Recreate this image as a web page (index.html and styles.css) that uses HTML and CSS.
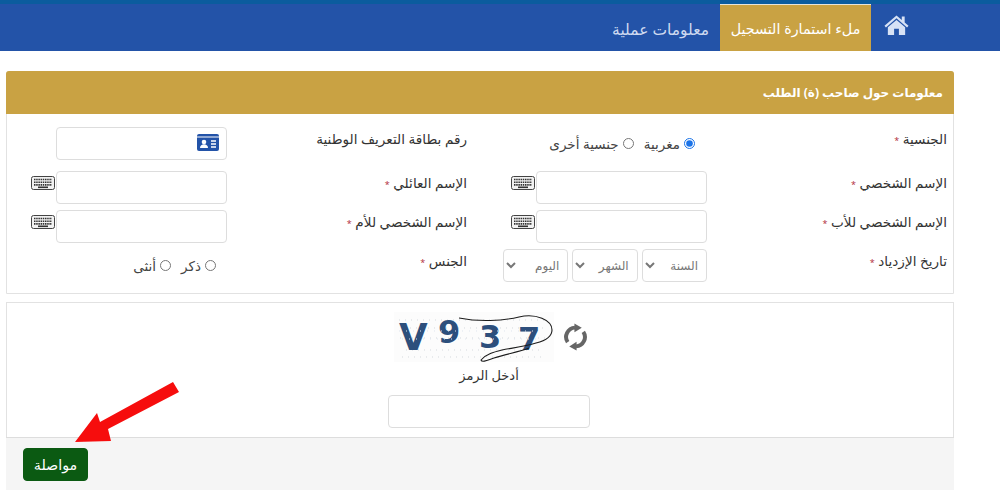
FILE: index.html
```html
<!DOCTYPE html>
<html lang="ar" dir="rtl">
  <head>
    <meta charset="UTF-8" />
    <title>ملء استمارة التسجيل</title>
    <link rel="stylesheet" href="styles.css">
  </head>
  <body>
    <svg class="defs" width="0" height="0">
      <symbol id="kbd" viewBox="0 0 24 14">
        <rect x="0.5" y="0.5" width="23" height="13" rx="2" fill="#f2f2f2" stroke="#444" />
        <path d="M3 3.5h18M3 6.2h18M3 8.9h18" stroke="#333" stroke-width="1.6" stroke-dasharray="1.5 .7" />
        <path d="M7 11.3h10" stroke="#333" stroke-width="1.6" />
      </symbol>
    </svg>

    <!-- Navigation Bar -->
    <header class="navbar">
      <a class="nav-home" href="#">
        <svg width="26" height="22" viewBox="0 0 26 22">
          <path d="M13 1 L18.500 5.700 V2.200 H21.500 V8.300 L25.500 11.800 L24 13.500 L13 4 L2 13.500 L.5 11.800 Z" fill="#d7e2f5" />
          <path d="M13 5.800 L22 13.400 V21.500 H15.500 V15 H10.500 V21.500 H4 V13.400 Z" fill="#d7e2f5" />
        </svg>
      </a>
      <a class="nav-tab active" href="#">ملء استمارة التسجيل</a>
      <a class="nav-tab info" href="#">معلومات عملية</a>
    </header>

    <main class="page">
      <!-- Applicant info -->
      <section class="card">
        <h2 class="card-title">معلومات حول صاحب (ة) الطلب</h2>
        <div class="form-grid">
          <div class="form-label">الجنسية <span class="req">*</span></div>
          <div class="radio-group nat">
            <label><input type="radio" name="nat" checked /> مغربية</label>
            <label><input type="radio" name="nat" /> جنسية أخرى</label>
          </div>
          <div class="form-label">رقم بطاقة التعريف الوطنية</div>
          <div class="input-wrap">
            <input type="text" />
            <svg class="id-icon" width="22" height="17" viewBox="0 0 22 17">
              <rect width="22" height="17" rx="2" fill="#2353a8" />
              <path d="M0 3h22" stroke="#fff" stroke-width="1" />
              <circle cx="7" cy="8" r="2.300" fill="#fff" />
              <path d="M3 14c0-5 8-5 8 0z" fill="#fff" />
              <path d="M14 7h5M14 10h5M14 13h5" stroke="#fff" stroke-width="1.300" />
            </svg>
          </div>
          <div></div>

          <div class="form-label">الإسم الشخصي <span class="req">*</span></div>
          <input type="text" />
          <svg class="kbd" width="24" height="14"><use href="#kbd" /></svg>
          <div class="form-label">الإسم العائلي <span class="req">*</span></div>
          <input type="text" />
          <svg class="kbd" width="24" height="14"><use href="#kbd" /></svg>

          <div class="form-label">الإسم الشخصي للأب <span class="req">*</span></div>
          <input type="text" />
          <svg class="kbd" width="24" height="14"><use href="#kbd" /></svg>
          <div class="form-label">الإسم الشخصي للأم <span class="req">*</span></div>
          <input type="text" />
          <svg class="kbd" width="24" height="14"><use href="#kbd" /></svg>

          <div class="form-label">تاريخ الإزدياد <span class="req">*</span></div>
          <div class="dates">
            <select><option>السنة</option></select>
            <select><option>الشهر</option></select>
            <select><option>اليوم</option></select>
          </div>
          <div class="form-label">الجنس <span class="req">*</span></div>
          <div class="radio-group gender">
            <label><input type="radio" name="gender" /> ذكر</label>
            <label><input type="radio" name="gender" /> أنثى</label>
          </div>
        </div>
      </section>

      <!-- Captcha -->
      <section class="card captcha-card">
        <div class="captcha-row">
          <svg class="refresh" width="25" height="28" viewBox="0 0 24 26" fill="none" stroke="#666" stroke-width="3.800">
            <path d="M4.500 18 A9 9 0 0 1 11.500 4" />
            <path d="M19.500 8 A9 9 0 0 1 12.500 22" />
            <path d="M11 0 L18 4 L11 8.500 Z" fill="#666" stroke="none" />
            <path d="M13 17.500 L6 22 L13 26 Z" fill="#666" stroke="none" />
          </svg>
          <svg class="captcha" width="160" height="50" viewBox="0 0 160 50">
            <rect width="160" height="50" fill="#fcfcfc" />
            <path d="M5 8h150M10 16h140M6 26h148M12 38h136M8 45h144" stroke="#d5d9dd" stroke-width="1" stroke-dasharray="1 5" />
            <g class="captcha-text" direction="ltr">
              <text x="5" y="38" font-size="37">V</text>
              <text x="44" y="31" font-size="32">9</text>
              <text x="85" y="36" font-size="32">3</text>
              <text x="124" y="38" font-size="32">7</text>
            </g>
            <path d="M5 19h140M8 27h140" stroke="#dfe5ee" stroke-width="1" stroke-dasharray="1 6" />
            <path d="M65 6 C85 10 108 9 125 5 C142 1 158 8 158 18 C158 26 150 29 142 31 C128 35 118 36 108 38 C100 40 92 42 87 48 C88 51 94 48 100 46 C112 42 125 40 135 36" fill="none" stroke="#1c1c1c" stroke-width="1.100" />
          </svg>
        </div>
        <label class="captcha-label">أدخل الرمز</label>
        <input class="captcha-input" type="text" />
      </section>

      <div class="form-footer">
        <button class="btn-next" type="button">مواصلة</button>
      </div>
    </main>

    <svg class="arrow" width="120" height="70" viewBox="0 0 120 70">
      <path d="M113 2 L119 12 L48 49 L51 61 L15 62 L37 33 L40 42 Z" fill="#f60d0d" />
    </svg>
  </body>
</html>
```

FILE: styles.css
```css
/* General Styling */
* {
  box-sizing: border-box;
  margin: 0;
  padding: 0;
}

body {
  position: relative;
  height: 503px;
  overflow: hidden;
  font-family: "Open Sans", "DejaVu Sans", sans-serif;
  font-size: 14px;
  color: #333;
  background: #fff;
}

.defs {
  position: absolute;
}

/* Navbar */
.navbar {
  display: flex;
  height: 51px;
  padding-right: 78px;
  background: #2353a8;
  border-top: 4px solid #0b5c9e;
}

.nav-home {
  display: flex;
  align-items: center;
  width: 51px;
  padding: 0 13px 6px;
}

.nav-tab {
  display: flex;
  align-items: center;
  height: 47px;
  padding: 2px 11px 0;
  color: #cfdaf0;
  text-decoration: none;
}

.nav-tab.info {
  font-size: 15.500px;
}

.nav-tab.active {
  width: 151px;
  justify-content: center;
  padding: 0;
  color: #fff;
  font-size: 14.300px;
  background: #c9a243;
  border-top: 1px solid #e8e4d8;
}

.page {
  width: 948px;
  margin: 20px 46px 0 6px;
}

/* Cards */
.card {
  border: 1px solid #e2e2e2;
  border-radius: 3px 3px 0 0;
  margin-bottom: 8px;
}

.card-title {
  height: 43px;
  margin: -1px -1px 0;
  padding: 0 11px;
  color: #fff;
  font-size: 12px;
  line-height: 43px;
  background: #c9a243;
  border-radius: 3px 3px 0 0;
}

.form-grid {
  display: grid;
  grid-template-columns: 240px 171px 69px 240px 171px 50px;
  grid-template-rows: 38px 33px 33px 33px;
  row-gap: 6px;
  align-items: start;
  padding: 13px 6px 11px 0;
}

.form-label {
  padding-top: 2px;
  font-size: 13.600px;
  line-height: 20px;
}

.req {
  color: #b02a37;
  font-size: 9px;
}

input[type="text"] {
  width: 171px;
  height: 33px;
  border: 1px solid #ddd;
  border-radius: 4px;
  background: #fff;
}

.input-wrap {
  position: relative;
  height: 33px;
}

.id-icon {
  position: absolute;
  top: 7px;
  right: 8px;
}

.kbd {
  margin-top: 5px;
  margin-right: 1px;
}

.radio-group {
  display: flex;
  align-items: center;
  gap: 10px;
  height: 33px;
  padding-right: 11px;
  font-size: 13.500px;
  color: #444;
  white-space: nowrap;
}

.radio-group label {
  display: flex;
  align-items: center;
  gap: 4px;
}

.radio-group.nat {
  grid-column: span 2;
  padding-right: 12px;
}

input[type="radio"] {
  width: 11px;
  height: 11px;
  accent-color: #1a73e8;
}

.dates {
  display: flex;
  grid-column: span 2;
  gap: 4px;
  width: 204px;
}

.dates select {
  width: 66px;
  height: 33px;
  padding: 0 4px;
  color: #777;
  font-family: inherit;
  font-size: 12px;
  background: #fff;
  border: 1px solid #ddd;
  border-radius: 4px;
}

/* Captcha */
.captcha-card {
  display: flex;
  flex-direction: column;
  align-items: center;
  height: 135px;
  margin-bottom: 0;
  padding-top: 9px;
  padding-left: 18px;
  border-bottom: 0;
  border-radius: 0;
}

.captcha-row {
  display: flex;
  align-items: center;
  gap: 9px;
  height: 50px;
  margin-left: 3px;
}

.captcha-text {
  font-family: "DejaVu Sans", sans-serif;
  font-weight: bold;
  fill: #2d4f7c;
}

.captcha-label {
  margin-top: 3px;
  font-size: 13px;
  line-height: 20px;
}

.captcha-input[type="text"] {
  width: 202px;
  margin-top: 10px;
}

/* Footer */
.form-footer {
  height: 53px;
  padding: 10px 17px;
  direction: ltr;
  background: #f5f5f5;
  border-top: 1px solid #ddd;
}

.btn-next {
  width: 65px;
  height: 33px;
  color: #fff;
  font-family: inherit;
  font-size: 14.300px;
  background: #0b5a12;
  border: 1px solid #0b5a12;
  border-radius: 4px;
}

.arrow {
  position: absolute;
  top: 380px;
  left: 60px;
}
```
